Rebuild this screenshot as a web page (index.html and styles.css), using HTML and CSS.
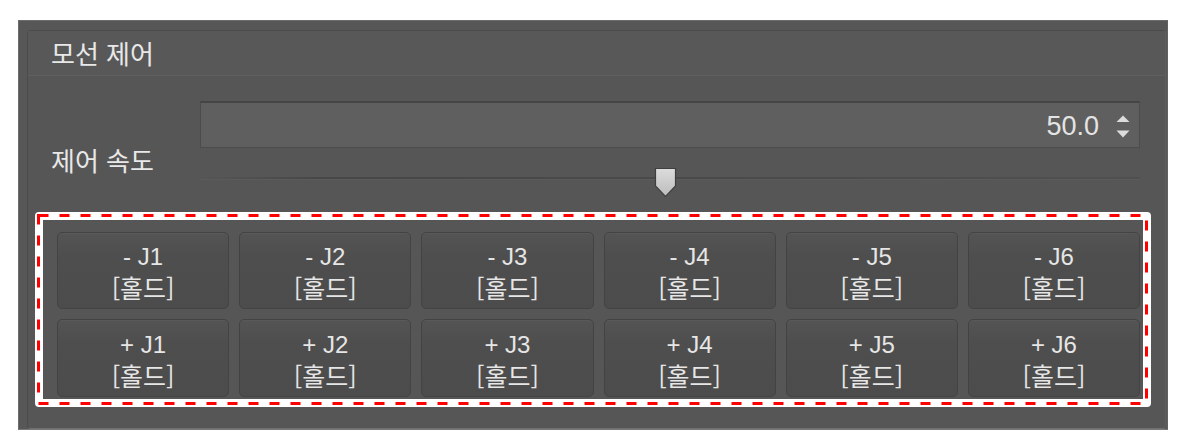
FILE: index.html
```html
<!DOCTYPE html>
<html lang="ko">
<head>
<meta charset="utf-8">
<title>모선 제어</title>
<link rel="stylesheet" href="styles.css">
</head>
<body>
<div class="panel">
  <div class="group">
    <div class="group-header">모선 제어</div>
    <div class="speed-row">
      <div class="speed-label">제어 속도</div>
      <div class="speed-controls">
        <div class="spinbox">
          <span class="spin-value">50.0</span>
          <span class="spin-arrows">
            <svg class="arrow" width="14" height="9" viewBox="0 0 14 9"><polygon points="7,0.5 13.5,7 0.5,7" fill="#dcdcdc"/></svg>
            <svg class="arrow" width="14" height="9" viewBox="0 0 14 9"><polygon points="0.5,1.5 13.5,1.5 7,8.5" fill="#dcdcdc"/></svg>
          </span>
        </div>
        <div class="slider">
          <div class="groove"></div>
          <div class="handle">
            <svg width="23" height="31" viewBox="0 0 23 31">
              <defs>
                <linearGradient id="hg" x1="0" y1="0" x2="0" y2="1">
                  <stop offset="0" stop-color="#dcdcdc"/>
                  <stop offset="1" stop-color="#bcbcbc"/>
                </linearGradient>
              </defs>
              <polygon points="1.5,1.5 21.5,1.5 21.5,19 11.5,29.5 1.5,19" fill="url(#hg)" stroke="#3f3f3f" stroke-width="1.2"/>
            </svg>
          </div>
        </div>
      </div>
    </div>
    <div class="highlight">
      <svg class="hl-dash" width="1111" height="191" viewBox="0 0 1111 191">
        <rect x="1.5" y="1.5" width="1108" height="188" fill="none" stroke="#ff0000" stroke-width="3" stroke-dasharray="10 11"/>
      </svg>
      <div class="jog-grid">
        <button class="jog-btn"><span class="axis">- J1</span><span class="hold">[홀드]</span></button>
        <button class="jog-btn"><span class="axis">- J2</span><span class="hold">[홀드]</span></button>
        <button class="jog-btn"><span class="axis">- J3</span><span class="hold">[홀드]</span></button>
        <button class="jog-btn"><span class="axis">- J4</span><span class="hold">[홀드]</span></button>
        <button class="jog-btn"><span class="axis">- J5</span><span class="hold">[홀드]</span></button>
        <button class="jog-btn"><span class="axis">- J6</span><span class="hold">[홀드]</span></button>
        <button class="jog-btn"><span class="axis">+ J1</span><span class="hold">[홀드]</span></button>
        <button class="jog-btn"><span class="axis">+ J2</span><span class="hold">[홀드]</span></button>
        <button class="jog-btn"><span class="axis">+ J3</span><span class="hold">[홀드]</span></button>
        <button class="jog-btn"><span class="axis">+ J4</span><span class="hold">[홀드]</span></button>
        <button class="jog-btn"><span class="axis">+ J5</span><span class="hold">[홀드]</span></button>
        <button class="jog-btn"><span class="axis">+ J6</span><span class="hold">[홀드]</span></button>
      </div>
    </div>
  </div>
</div>
</body>
</html>
```
FILE: styles.css
```css
* { box-sizing: border-box; }

body {
  margin: 0;
  background: #ffffff;
  font-family: "Liberation Sans", "Noto Sans CJK KR", sans-serif;
}

.panel {
  margin: 20px 0 0 18px;
  width: 1150px;
  height: 410px;
  background: #575757;
  border: 1px solid #6c6c6c;
  border-right-color: #626262;
  border-bottom-color: #787878;
  display: flex;
  flex-direction: column;
}

.group {
  margin: 9px 1px 0 8px;
  border: 1px solid #4b4b4b;
  border-right-color: #5e5e5e;
  border-bottom-color: #6f6f6f;
  border-radius: 4px;
  padding-bottom: 21px;
  background: #565656;
}

.group-header {
  height: 45px;
  padding-left: 23px;
  border-bottom: 1px solid #5f5f5f;
  background: #585858;
  color: #e8e8e8;
  font-family: "Noto Sans CJK KR", "Liberation Sans", sans-serif;
  font-size: 26px;
  line-height: 44px;
}

.speed-row {
  display: flex;
  margin: 25px 25px 0 23px;
}

.speed-label {
  width: 149px;
  flex: none;
  padding-top: 44px;
  color: #e8e8e8;
  font-family: "Noto Sans CJK KR", "Liberation Sans", sans-serif;
  font-size: 26px;
  line-height: 30px;
}

.speed-controls {
  flex: 1;
  display: flex;
  flex-direction: column;
}

.spinbox {
  height: 47px;
  background: #5f5f5f;
  border: 1px solid #4c4c4c;
  border-top: 2px solid #454545;
  display: flex;
  align-items: center;
  justify-content: flex-end;
  padding-right: 9px;
}

.spin-value {
  color: #e4e4e4;
  font-size: 27px;
  line-height: 30px;
  margin-right: 17px;
  padding-top: 2px;
}

.spin-arrows {
  display: flex;
  flex-direction: column;
  gap: 5px;
  padding-top: 2px;
}

.arrow { display: block; }

.slider {
  position: relative;
  height: 57px;
  padding-top: 29px;
}

.groove {
  height: 2px;
  background: linear-gradient(to right, rgba(70,70,70,0) 0px, #474747 120px, #4a4a4a 60%, #505050 100%);
  box-shadow: 0 1px 0 #5b5b5b;
}

.handle {
  position: absolute;
  left: 454px;
  top: 19px;
  width: 23px;
  height: 31px;
}

.handle svg { display: block; }

.highlight {
  position: relative;
  margin: 7px 14px 0 7px;
  border: 8px solid #ffffff;
  border-radius: 4px;
  background: #565656;
}

.hl-dash {
  position: absolute;
  top: -6px;
  left: -6px;
  display: block;
  pointer-events: none;
}

.jog-grid {
  display: grid;
  grid-template-columns: repeat(6, 1fr);
  grid-template-rows: 77px 78px;
  column-gap: 10px;
  row-gap: 10px;
  padding: 12px 3px 2px 14px;
}

.jog-btn {
  margin: 0;
  padding: 3px 0 0;
  border: 1px solid #434343;
  border-radius: 5px;
  background: linear-gradient(to bottom, #545454 0%, #4e4e4e 30%, #4c4c4c 100%);
  box-shadow: inset 0 1px 0 #595959;
  color: #e6e6e6;
  display: flex;
  flex-direction: column;
  align-items: center;
  justify-content: center;
  text-align: center;
}

.axis {
  display: block;
  font-family: "Liberation Sans", "Noto Sans CJK KR", sans-serif;
  font-size: 24px;
  line-height: 31px;
}

.hold {
  display: block;
  font-family: "Noto Sans CJK KR", "Liberation Sans", sans-serif;
  font-size: 25px;
  line-height: 31px;
}
```
